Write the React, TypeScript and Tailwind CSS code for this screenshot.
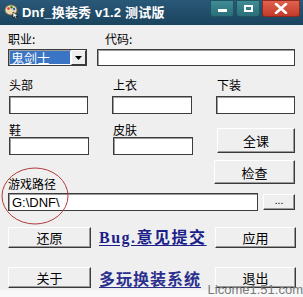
import React from "react";

const cjk = { fontFamily: '"Noto Sans CJK SC", "Noto Sans", sans-serif' };

function Btn({ label, className = "" }: { label: string; className?: string }) {
  return (
    <div
      className={
        "flex items-center justify-center bg-[#efefef] border-t border-l border-t-white border-l-white border-b border-r border-b-[#3a3a3a] border-r-[#3a3a3a] shadow-[inset_-1px_-1px_0_#9a9a9a] text-[13px] text-black leading-none " +
        className
      }
      style={cjk}
    >
      {label}
    </div>
  );
}

function Field({ className = "", children }: { className?: string; children?: React.ReactNode }) {
  return (
    <div
      className={
        "bg-white border border-[#3c3c3c] shadow-[inset_1px_1px_0_#9c9c9c] flex items-center " + className
      }
    >
      {children}
    </div>
  );
}

function Label({ text, className = "" }: { text: string; className?: string }) {
  return (
    <div className={"text-[12px] leading-[14px] text-black " + className} style={cjk}>
      {text}
    </div>
  );
}

export default function App() {
  return (
    <div className="relative w-[303px] h-[297px] overflow-hidden bg-[#efefef] select-none">
      {/* Title bar */}
      <div className="h-[25px] flex items-start bg-gradient-to-b from-[#2a5878] to-[#1a445f]">
        <div className="w-[22px] h-[22px] flex items-center justify-center pl-[2px]">
          <svg width="16" height="16" viewBox="0 0 16 16">
            <ellipse cx="7" cy="7" rx="6" ry="5" fill="#e8d9b0" stroke="#8a6a3a" strokeWidth="0.8" />
            <circle cx="4.5" cy="5.5" r="1.3" fill="#d33" />
            <circle cx="7.5" cy="4.2" r="1.2" fill="#2a8a2a" />
            <circle cx="10" cy="6" r="1.2" fill="#2b5fd0" />
            <path d="M9 9 L9 15 L10.5 13.5 L12 16 L13 15.5 L11.8 13 L14 13 Z" fill="#fff" stroke="#000" strokeWidth="0.6" />
          </svg>
        </div>
        <div
          className="pt-[5px] text-[13px] leading-[16px] font-bold text-white tracking-[0.2px]"
          style={{ fontFamily: '"Liberation Sans", "Noto Sans CJK SC", sans-serif' }}
        >
          Dnf_换装秀 v1.2 测试版
        </div>
        <div className="ml-auto flex items-start gap-[2px] pr-[3px]">
          <div className="w-[24px] h-[17px] rounded-b-[3px] bg-gradient-to-b from-[#3f8c95] to-[#2a6f7a] border border-[#1e5560] flex items-center justify-center">
            <div className="w-[9px] h-[3px] bg-white mt-[4px]" />
          </div>
          <div className="w-[24px] h-[17px] rounded-b-[3px] bg-gradient-to-b from-[#3f8c95] to-[#2a6f7a] border border-[#1e5560] flex items-center justify-center">
            <div className="w-[9px] h-[7px] border-2 border-white" />
          </div>
          <div className="w-[38px] h-[17px] rounded-b-[3px] bg-gradient-to-b from-[#e0624e] to-[#c2392a] border border-[#8e2a20] flex items-center justify-center">
            <svg width="14" height="11" viewBox="0 0 14 11">
              <path d="M2 1 L12 10 M12 1 L2 10" stroke="#fff" strokeWidth="2.6" strokeLinecap="round" />
            </svg>
          </div>
        </div>
      </div>

      {/* Body */}
      <div className="px-[8px]">
        {/* Row 1 labels */}
        <div className="h-[24px] flex items-start pt-[7px]">
          <Label text="职业:" className="w-[97px]" />
          <Label text="代码:" />
        </div>
        {/* Row 1 controls */}
        <div className="h-[17px] flex items-start">
          <div className="w-[80px] h-[17px] bg-white border border-[#3c3c3c] shadow-[inset_1px_1px_0_#9c9c9c] flex items-stretch">
            <div className="flex-1 m-[1px] bg-[#3a74c4] text-white text-[13px] leading-[13px] flex items-center pl-[1px]" style={cjk}>
              鬼剑士
            </div>
            <div className="w-[15px] bg-[#efefef] border-t border-l border-t-white border-l-white border-b border-r border-b-[#3a3a3a] border-r-[#3a3a3a] flex items-center justify-center">
              <svg width="7" height="4" viewBox="0 0 7 4">
                <path d="M0 0 L7 0 L3.5 4 Z" fill="#000" />
              </svg>
            </div>
          </div>
          <Field className="ml-[10px] w-[200px] h-[17px]" />
        </div>

        {/* Row 2 labels */}
        <div className="h-[30px] flex items-start pt-[12px]">
          <Label text="头部" className="w-[104px] pl-[1px]" />
          <Label text="上衣" className="w-[104px] pl-[1px]" />
          <Label text="下装" className="pl-[1px]" />
        </div>
        {/* Row 2 inputs */}
        <div className="h-[18px] flex items-start pl-[1px] gap-[24px]">
          <Field className="w-[80px] h-[18px]" />
          <Field className="w-[80px] h-[18px]" />
          <Field className="w-[80px] h-[18px]" />
        </div>

        {/* Row 3 */}
        <div className="h-[40px] flex items-start pl-[1px] gap-[24px]">
          <div className="w-[80px] pt-[9px]">
            <Label text="鞋" />
            <Field className="mt-[0px] w-[80px] h-[18px]" />
          </div>
          <div className="w-[80px] pt-[9px]">
            <Label text="皮肤" />
            <Field className="w-[80px] h-[18px]" />
          </div>
          <Btn label="全课" className="mt-[14px] w-[81px] h-[25px]" />
        </div>

        {/* Row 4: path label + 检查 */}
        <div className="h-[39px] flex items-start">
          <Label text="游戏路径" className="pt-[23px]" />
          <Btn label="检查" className="ml-auto mt-[6px] w-[81px] h-[24px]" />
        </div>

        {/* Path row */}
        <div className="h-[18px] flex items-start">
          <Field className="w-[250px] h-[18px]">
            <span
              className="pl-[3px] text-[13px] leading-none text-black"
              style={{ fontFamily: '"Liberation Sans", sans-serif' }}
            >
              G:\DNF\
            </span>
          </Field>
          <Btn label="..." className="ml-auto mt-[1px] w-[32px] h-[16px] !text-[10px] !items-start" />
        </div>

        {/* Bottom row 1 */}
        <div className="mt-[16px] h-[21px] flex items-center">
          <Btn label="还原" className="w-[83px] h-[21px]" />
          <div
            className="ml-[8px] text-[16px] leading-none font-bold text-[#1c1f8a] underline underline-offset-2 tracking-[1.5px]"
            style={{ fontFamily: '"Liberation Serif", "Noto Sans CJK SC", serif' }}
          >
            Bug.意见提交
          </div>
          <Btn label="应用" className="ml-auto w-[81px] h-[21px] -mr-[1px]" />
        </div>

        {/* Bottom row 2 */}
        <div className="mt-[19px] h-[21px] flex items-center">
          <Btn label="关于" className="w-[83px] h-[21px]" />
          <div
            className="ml-[8px] text-[16px] leading-none font-bold text-[#2a2f8e] underline underline-offset-2 tracking-[1px]"
            style={cjk}
          >
            多玩换装系统
          </div>
          <Btn label="退出" className="ml-auto w-[81px] h-[21px] -mr-[1px]" />
        </div>
      </div>

      {/* Red circle annotation */}
      <svg className="absolute left-0 top-0 pointer-events-none" width="303" height="297">
        <ellipse cx="35" cy="196" rx="33" ry="28" fill="none" stroke="#b23a3a" strokeWidth="1" />
      </svg>

      {/* Watermark */}
      <div className="absolute left-0 right-0 bottom-0 h-[7px] bg-[#f8f8f8]" />
      <div
        className="absolute right-0 bottom-0 text-[13px] leading-[14px] text-[#7a7a7a] pl-[2px]"
        style={{ fontFamily: '"Liberation Sans", sans-serif' }}
      >
        Licome1.51.com
      </div>
    </div>
  );
}
